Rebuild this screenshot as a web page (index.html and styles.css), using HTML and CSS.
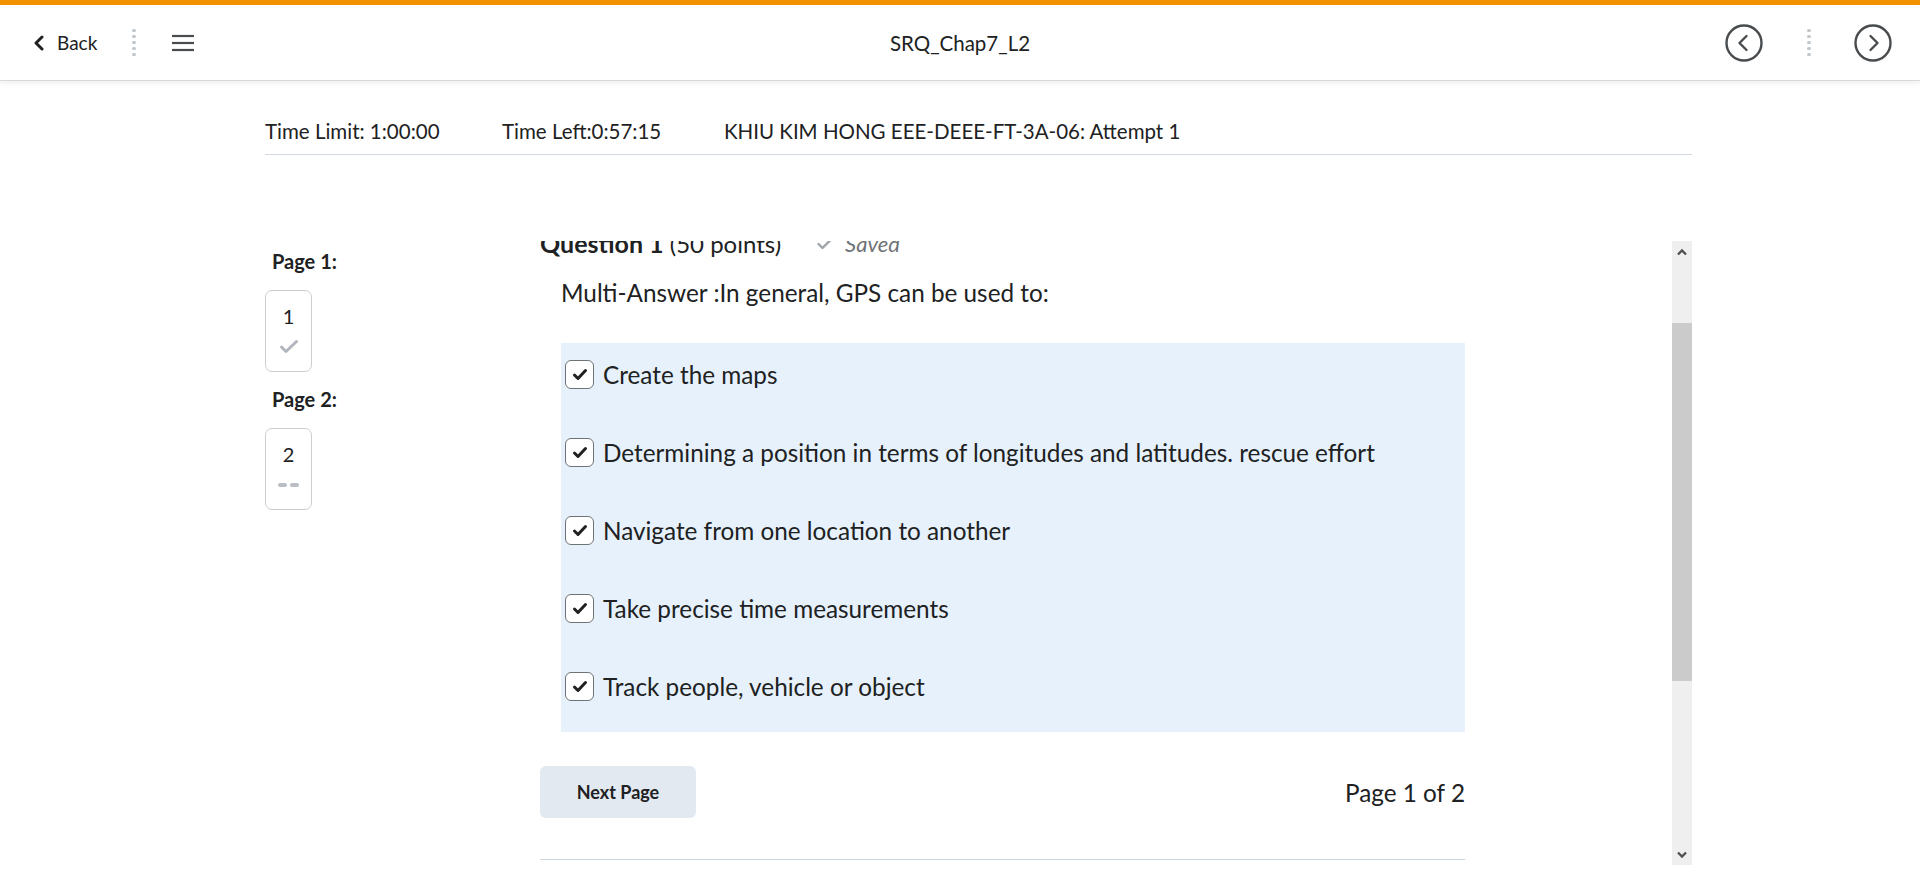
FILE: index.html
```html
<!DOCTYPE html>
<html lang="en">
<head>
<meta charset="utf-8">
<title>SRQ_Chap7_L2</title>
<link rel="stylesheet" href="styles.css">
</head>
<body>
<header class="topbar">
  <div class="tb-left">
    <a class="back">
      <svg class="back-chev" width="12" height="16" viewBox="0 0 12 16"><polyline points="9,2 3,8 9,14" fill="none" stroke="#202122" stroke-width="3" stroke-linecap="round" stroke-linejoin="round"/></svg>
      <span>Back</span>
    </a>
    <span class="vdots"><i></i><i></i><i></i><i></i><i></i></span>
    <svg class="burger" width="22" height="18" viewBox="0 0 22 18"><g stroke="#494c4e" stroke-width="2.2"><line x1="0" y1="2" x2="22" y2="2"/><line x1="0" y1="9" x2="22" y2="9"/><line x1="0" y1="16" x2="22" y2="16"/></g></svg>
  </div>
  <div class="tb-title">SRQ_Chap7_L2</div>
  <div class="tb-right">
    <svg width="38" height="38" viewBox="0 0 38 38"><circle cx="19" cy="19" r="17.5" fill="none" stroke="#494c4e" stroke-width="2.4"/><polyline points="21.5,12 14.5,19 21.5,26" fill="none" stroke="#494c4e" stroke-width="2.4" stroke-linecap="round" stroke-linejoin="round"/></svg>
    <span class="vdots"><i></i><i></i><i></i><i></i><i></i></span>
    <svg width="38" height="38" viewBox="0 0 38 38"><circle cx="19" cy="19" r="17.5" fill="none" stroke="#494c4e" stroke-width="2.4"/><polyline points="16.5,12 23.5,19 16.5,26" fill="none" stroke="#494c4e" stroke-width="2.4" stroke-linecap="round" stroke-linejoin="round"/></svg>
  </div>
</header>

<div class="wrap">
  <div class="meta">
    <span class="m1">Time Limit: 1:00:00</span>
    <span class="m2">Time Left:0:57:15</span>
    <span class="m3">KHIU KIM HONG EEE-DEEE-FT-3A-06: Attempt 1</span>
  </div>

  <div class="main">
    <nav class="pages">
      <div class="plabel">Page 1:</div>
      <div class="pbox">
        <span class="pnum">1</span>
        <svg class="pstat" width="20" height="15" viewBox="0 0 20 15"><polyline points="2.5,8 7,12.5 17.5,2.5" fill="none" stroke="#b1b7bc" stroke-width="3" stroke-linecap="round" stroke-linejoin="round"/></svg>
      </div>
      <div class="plabel">Page 2:</div>
      <div class="pbox">
        <span class="pnum">2</span>
        <span class="pdash"><i></i><i></i></span>
      </div>
    </nav>

    <section class="scroller">
      <div class="scroll-content">
        <div class="inner">
          <h2 class="qhead">
            <span class="qtitle"><b>Question 1</b> (50 points)</span>
            <span class="saved"><svg width="15" height="12" viewBox="0 0 15 12"><polyline points="1.5,6 5.5,10 13.5,2" fill="none" stroke="#9ea4a8" stroke-width="2.4" stroke-linecap="round" stroke-linejoin="round"/></svg><em>Saved</em></span>
          </h2>
          <div class="qbody">
            <p class="qtext">Multi-Answer :In general, GPS can be used to:</p>
            <div class="answers">
              <label class="opt"><span class="cb"><svg width="16" height="13" viewBox="0 0 16 13"><polyline points="2.5,7 6,10.5 13.5,2.5" fill="none" stroke="#202122" stroke-width="3" stroke-linecap="round" stroke-linejoin="round"/></svg></span>Create the maps</label>
              <label class="opt"><span class="cb"><svg width="16" height="13" viewBox="0 0 16 13"><polyline points="2.5,7 6,10.5 13.5,2.5" fill="none" stroke="#202122" stroke-width="3" stroke-linecap="round" stroke-linejoin="round"/></svg></span>Determining a position in terms of longitudes and latitudes. rescue effort</label>
              <label class="opt"><span class="cb"><svg width="16" height="13" viewBox="0 0 16 13"><polyline points="2.5,7 6,10.5 13.5,2.5" fill="none" stroke="#202122" stroke-width="3" stroke-linecap="round" stroke-linejoin="round"/></svg></span>Navigate from one location to another</label>
              <label class="opt"><span class="cb"><svg width="16" height="13" viewBox="0 0 16 13"><polyline points="2.5,7 6,10.5 13.5,2.5" fill="none" stroke="#202122" stroke-width="3" stroke-linecap="round" stroke-linejoin="round"/></svg></span>Take precise time measurements</label>
              <label class="opt"><span class="cb"><svg width="16" height="13" viewBox="0 0 16 13"><polyline points="2.5,7 6,10.5 13.5,2.5" fill="none" stroke="#202122" stroke-width="3" stroke-linecap="round" stroke-linejoin="round"/></svg></span>Track people, vehicle or object</label>
            </div>
          </div>
          <div class="pager">
            <button class="next">Next Page</button>
            <span class="pcount">Page 1 of 2</span>
          </div>
          <div class="rule"></div>
        </div>
      </div>
      <div class="scrollbar">
        <svg class="sb-arrow" width="12" height="8" viewBox="0 0 12 8"><polyline points="2,6.5 6,2.5 10,6.5" fill="none" stroke="#505050" stroke-width="2.4"/></svg>
        <div class="sb-track"><div class="sb-thumb"></div></div>
        <svg class="sb-arrow" width="12" height="8" viewBox="0 0 12 8"><polyline points="2,1.5 6,5.5 10,1.5" fill="none" stroke="#505050" stroke-width="2.4"/></svg>
      </div>
    </section>
  </div>
</div>
</body>
</html>
```

FILE: styles.css
```css
* { box-sizing: border-box; }
html, body { margin: 0; padding: 0; background: #fff; }
body {
  font-family: "Lato", "Noto Sans", sans-serif;
  color: #202122;
  overflow: hidden;
  height: 888px;
}

.topbar {
  height: 81px;
  border-top: 5px solid #f29200;
  border-bottom: 1px solid #d9d9d9;
  box-shadow: 0 2px 6px rgba(0,0,0,0.08);
  display: grid;
  grid-template-columns: 1fr auto 1fr;
  align-items: center;
  background: #fff;
}
.tb-left { display: flex; align-items: center; padding-left: 33px; }
.back { display: flex; align-items: center; gap: 12px; font-size: 19px; color: #202122; }
.back-chev { margin-top: 1px; }
.vdots { display: inline-flex; flex-direction: column; gap: 2.5px; width: 3px; }
.vdots i { display: block; width: 3.5px; height: 3.5px; border-radius: 50%; background: #c1c7cc; }
.tb-left .vdots { margin-left: 35px; }
.burger { margin-left: 37px; }
.tb-title { font-size: 20.5px; color: #202122; text-align: center; }
.tb-right { display: flex; align-items: center; justify-content: flex-end; gap: 44px; padding-right: 28px; }

.wrap { margin-left: 265px; width: 1427px; }
.meta {
  display: flex;
  font-size: 20.5px;
  line-height: 24px;
  padding-top: 38px;
  padding-bottom: 11px;
  border-bottom: 1px solid #d3d9e3;
}
.m1 { width: 237px; }
.m2 { width: 222px; }

.main { display: flex; margin-top: 86px; }
.pages { width: 275px; padding-top: 8px; }
.plabel { font-weight: 700; font-size: 20px; line-height: 24px; padding-left: 7px; }
.pbox {
  width: 47px; height: 82px;
  border: 1px solid #c9ced3;
  border-radius: 7px;
  display: flex; flex-direction: column; align-items: center;
  padding-top: 13px;
  margin: 17px 0 15px;
}
.pnum { font-size: 20px; line-height: 24px; }
.pstat { margin-top: 11px; }
.pdash { display: flex; gap: 3px; margin-top: 17px; }
.pdash i { display: block; width: 9px; height: 3.5px; border-radius: 2px; background: #b8bec3; }

.scroller { display: flex; width: 1152px; height: 624px; }
.scroll-content { width: 925px; overflow: hidden; }
.inner { margin-top: -13px; }
.qhead { margin: 0; font-size: 24px; line-height: 30px; font-weight: 400; display: flex; align-items: center; }
.qtitle b { font-weight: 700; font-size: 25px; }
.saved { display: inline-flex; align-items: center; margin-left: 36px; color: #6e7376; font-size: 22px; gap: 13px; }
.saved em { font-style: italic; }
.qbody { padding-left: 21px; }
.qtext { margin: 19px 0 35px; font-size: 24.3px; line-height: 30px; }
.answers { background: #e6f1fb; padding: 0 0 15px 4px; }
.opt { display: flex; align-items: center; height: 62px; margin-bottom: 16px; font-size: 24.3px; gap: 9px; }
.opt:last-child { margin-bottom: 0; }
.cb {
  width: 29px; height: 29px;
  border: 1px solid #6e7376;
  border-radius: 6px;
  background: #fff;
  display: flex; align-items: center; justify-content: center;
}
.pager { display: flex; justify-content: space-between; align-items: center; margin-top: 34px; }
.next {
  width: 156px; height: 52px;
  border: none; border-radius: 6px;
  background: #e3e9f1;
  font-family: "Lato", sans-serif;
  font-weight: 700; font-size: 18px; color: #202122;
}
.pcount { font-size: 24.3px; }
.rule { margin-top: 41px; border-top: 1px solid #cdd5dc; }

.scrollbar { margin-left: auto; width: 20px; background: #efefef; display: flex; flex-direction: column; align-items: center; }
.sb-arrow { flex: none; margin: 7px 0 6px; }
.sb-track { flex: 1; width: 100%; }
.sb-thumb { margin-top: 61px; height: 358px; background: #cbcbcb; }
```
